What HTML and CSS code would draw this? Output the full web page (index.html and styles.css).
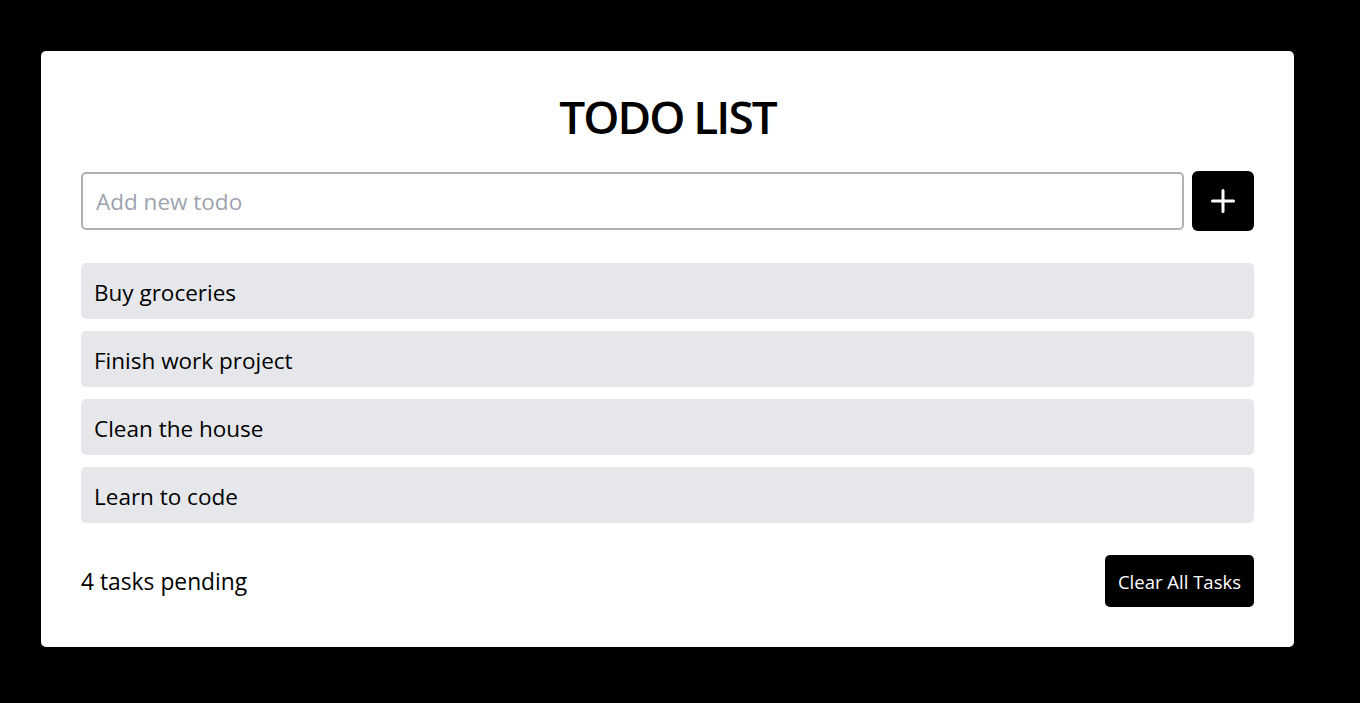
FILE: index.html
```html
<!DOCTYPE html>
<html lang="en">
<head>
<meta charset="utf-8">
<title>Todo List</title>
<link rel="stylesheet" href="styles.css">
</head>
<body>
<main class="card">
  <h1 class="title">TODO LIST</h1>
  <form class="add-row">
    <input class="add-input" type="text" placeholder="Add new todo">
    <button class="add-btn" type="button" aria-label="Add">
      <svg width="24" height="24" viewBox="0 0 24 24"><path d="M12 1.5v21M1.5 12h21" stroke="#fff" stroke-width="3" stroke-linecap="round" fill="none"/></svg>
    </button>
  </form>
  <ul class="todo-list">
    <li class="todo-item">Buy groceries</li>
    <li class="todo-item">Finish work project</li>
    <li class="todo-item">Clean the house</li>
    <li class="todo-item">Learn to code</li>
  </ul>
  <footer class="footer">
    <span class="pending">4 tasks pending</span>
    <button class="clear-btn" type="button">Clear All Tasks</button>
  </footer>
</main>
</body>
</html>
```

FILE: styles.css
```css
* { box-sizing: border-box; }
html, body { margin: 0; padding: 0; }
body {
  background: #000;
  font-family: "Open Sans", "Noto Sans", sans-serif;
  color: #000;
  height: 703px;
  overflow: hidden;
}
.card {
  width: 1253px;
  margin: 51px 0 0 41px;
  background: #fff;
  border-radius: 5px;
  padding: 40px;
}
.title {
  margin: 0 0 30px;
  text-align: center;
  font-size: 46px;
  font-weight: 600;
  line-height: 50px;
  letter-spacing: -2px;
}
.add-row {
  display: flex;
  gap: 8px;
  align-items: center;
  margin: 0 0 32px;
}
.add-input {
  flex: 1;
  height: 58px;
  border: 2px solid #b0b0b0;
  border-radius: 5px;
  padding: 0 13px;
  font-family: inherit;
  font-size: 22.5px;
  outline: none;
}
.add-input::placeholder { color: #9ca3af; }
.add-btn {
  width: 62px;
  height: 60px;
  border: none;
  border-radius: 6px;
  background: #000;
  display: flex;
  align-items: center;
  justify-content: center;
  padding: 0;
}
.todo-list {
  list-style: none;
  margin: 0;
  padding: 0;
  display: flex;
  flex-direction: column;
  gap: 12px;
}
.todo-item {
  height: 56px;
  background: #e5e7eb;
  border-radius: 5px;
  padding: 2px 13px 0;
  display: flex;
  align-items: center;
  font-size: 22.5px;
}
.footer {
  margin-top: 32px;
  display: flex;
  justify-content: space-between;
  align-items: center;
}
.pending { font-size: 22.8px; }
.clear-btn {
  height: 52px;
  padding: 0 13px;
  border: none;
  border-radius: 5px;
  background: #000;
  color: #fff;
  font-family: inherit;
  font-size: 18.5px;
}
```
